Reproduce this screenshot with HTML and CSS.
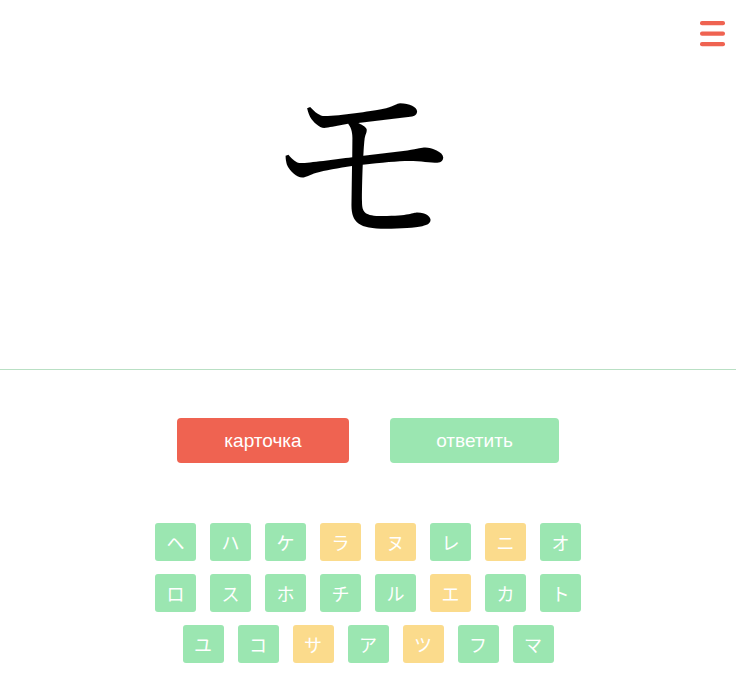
FILE: index.html
```html
<!DOCTYPE html>
<html lang="ru">
<head>
<meta charset="utf-8">
<link rel="stylesheet" href="styles.css">
</head>
<body>
<div class="app">
  <header class="card">
    <button class="menu" aria-label="menu">
      <svg width="25" height="26" viewBox="0 0 25 26">
        <rect x="0" y="0" width="25" height="4.2" rx="2" fill="#ef6351"/>
        <rect x="0" y="10.5" width="25" height="4.2" rx="2" fill="#ef6351"/>
        <rect x="0" y="21" width="25" height="4.2" rx="2" fill="#ef6351"/>
      </svg>
    </button>
    <div class="kana">モ</div>
  </header>
  <div class="actions">
    <button class="btn btn-red">карточка</button>
    <button class="btn btn-green">ответить</button>
  </div>
  <div class="tiles">
    <div class="row">
      <span class="tile g">ヘ</span><span class="tile g">ハ</span><span class="tile g">ケ</span><span class="tile y">ラ</span><span class="tile y">ヌ</span><span class="tile g">レ</span><span class="tile y">ニ</span><span class="tile g">オ</span>
    </div>
    <div class="row">
      <span class="tile g">ロ</span><span class="tile g">ス</span><span class="tile g">ホ</span><span class="tile g">チ</span><span class="tile g">ル</span><span class="tile y">エ</span><span class="tile g">カ</span><span class="tile g">ト</span>
    </div>
    <div class="row">
      <span class="tile g">ユ</span><span class="tile g">コ</span><span class="tile y">サ</span><span class="tile g">ア</span><span class="tile y">ツ</span><span class="tile g">フ</span><span class="tile g">マ</span>
    </div>
  </div>
</div>
</body>
</html>
```

FILE: styles.css
```css
* { box-sizing: border-box; }
html, body { margin: 0; padding: 0; background: #fff; }
body {
  font-family: "Liberation Sans", "Noto Sans CJK JP", Arial, sans-serif;
  width: 738px;
  height: 689px;
  overflow: hidden;
}
.app { width: 736px; }
.card {
  position: relative;
  height: 370px;
  border-bottom: 1px solid #b9e0c4;
  display: flex;
  justify-content: center;
}
.menu {
  position: absolute;
  top: 21px;
  right: 11px;
  padding: 0;
  border: 0;
  background: none;
  line-height: 0;
}
.kana {
  font-family: "Noto Serif CJK JP", "Noto Sans CJK JP", serif;
  font-size: 192px;
  line-height: 1;
  margin-top: 54px;
  padding-right: 7px;
  color: #000;
}
.actions {
  display: flex;
  justify-content: center;
  gap: 41px;
  margin-top: 48px;
}
.btn {
  height: 45px;
  border: 0;
  border-radius: 4px;
  color: #fff;
  font-family: "Liberation Sans", Arial, sans-serif;
  font-size: 19px;
  padding: 0;
}
.btn-red { width: 172px; background: #ef6351; }
.btn-green { width: 169px; background: #9be6b1; }
.tiles {
  margin-top: 60px;
  display: flex;
  flex-direction: column;
  align-items: center;
  gap: 13px;
}
.row {
  display: flex;
  gap: 14px;
}
.tile {
  width: 41px;
  height: 38px;
  border-radius: 3px;
  display: flex;
  align-items: center;
  justify-content: center;
  color: #fff;
  font-family: "Noto Sans CJK JP", sans-serif;
  font-size: 18px;
}
.g { background: #9be6b1; }
.y { background: #fbdb8c; }
```
